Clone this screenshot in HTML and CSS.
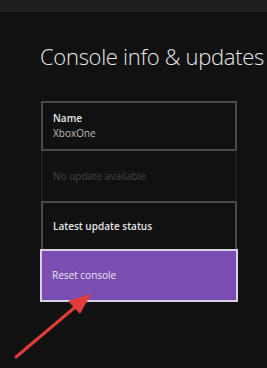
FILE: index.html
```html
<!DOCTYPE html>
<html lang="en">
<head>
    <meta charset="UTF-8">
    <meta name="viewport" content="width=device-width, initial-scale=1.0">
    <title>Console info &amp; updates</title>
    <link rel="stylesheet" href="styles.css">
</head>
<body>
    <div class="top-bar"></div>
    <div class="content">
        <h1>Console info &amp; updates</h1>
        <div class="menu">
            <div class="tile tile-name">
                <span class="label">Name</span>
                <span class="value">XboxOne</span>
            </div>
            <div class="tile tile-disabled">
                <span class="muted">No update available</span>
            </div>
            <div class="tile tile-status">
                <span class="label">Latest update status</span>
            </div>
            <div class="tile tile-reset">
                <span class="label">Reset console</span>
            </div>
        </div>
    </div>
    <!-- red annotation arrow -->
    <svg class="arrow" width="267" height="368" viewBox="0 0 267 368">
        <line x1="16" y1="357" x2="80" y2="303" stroke="#e03c3c" stroke-width="3" stroke-linecap="round"/>
        <polygon points="91,294 68,301 80,314" fill="#e03c3c"/>
    </svg>
</body>
</html>
```

FILE: styles.css
```css
body {
    margin: 0;
    background-color: #111111;
    font-family: "Open Sans", Arial, sans-serif;
    color: #e6e6e6;
    height: 368px;
    overflow: hidden;
}
.top-bar {
    height: 12px;
    background-color: #1e1e1e;
}
.content {
    padding-left: 40px;
}
.content h1 {
    margin: 0;
    padding-top: 29px;
    font-size: 22px;
    font-weight: 300;
    letter-spacing: -0.3px;
    color: #e8e8e8;
    line-height: 30px;
    white-space: nowrap;
}
.menu {
    margin-top: 30px;
    width: 198px;
    display: flex;
    flex-direction: column;
}
.tile {
    box-sizing: border-box;
    border: 2px solid #4a4a4a;
    padding: 0 10px;
    display: flex;
    flex-direction: column;
    justify-content: center;
}
.tile .label {
    font-size: 10px;
    font-weight: 600;
    line-height: 15px;
    color: #e6e6e6;
}
.tile .value {
    font-size: 10px;
    line-height: 15px;
    color: #bdbdbd;
}
.tile .muted {
    font-size: 10px;
    color: #444444;
}
.tile-name {
    height: 50px;
    margin: 0 1px;
}
.tile-disabled {
    height: 50px;
    margin: 0 1px;
    border-color: #1c1c1c;
    border-top: none;
    border-bottom: none;
}
.tile-status {
    height: 48px;
    margin: 0 1px;
    border-bottom: none;
}
.tile-reset {
    height: 53px;
    background-color: #7a4eb0;
    border-color: #d8d0e4;
}
.tile-reset .label {
    font-weight: 400;
    color: #ece6f4;
}
.arrow {
    position: absolute;
    top: 0;
    left: 0;
}
```
